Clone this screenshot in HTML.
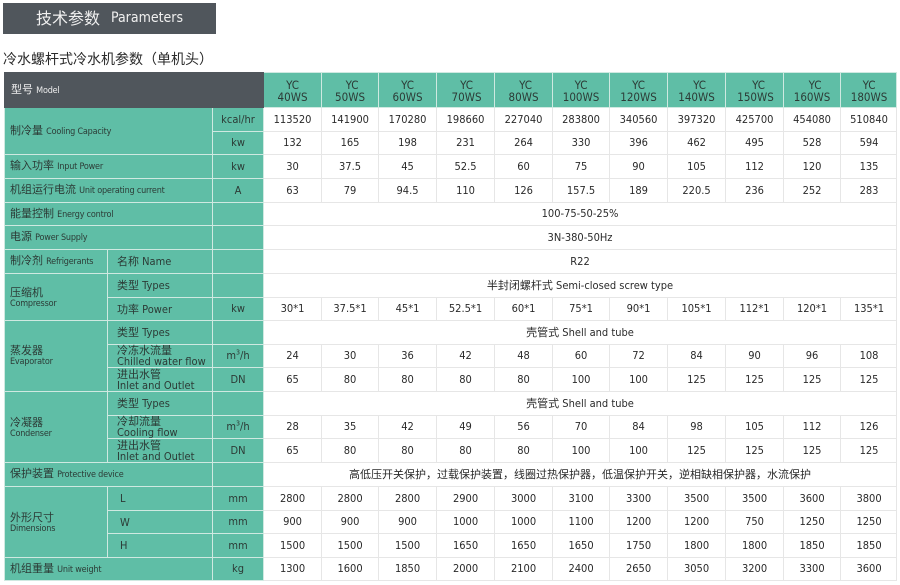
<!DOCTYPE html>
<html lang="zh">
<head>
<meta charset="utf-8">
<title>Parameters</title>
<style>
html,body{margin:0;padding:0;background:#fff;width:900px;height:585px;overflow:hidden}
body{position:relative;font-family:"DejaVu Sans Condensed","DejaVu Sans","Noto Sans CJK SC",sans-serif;font-stretch:condensed;color:#2a2a2a}
.bar{position:absolute;left:3px;top:3px;width:213px;height:31px;background:#50565c;color:#f0f0f0;line-height:31px;white-space:nowrap}
.bar b{font-weight:400;font-size:16px;position:absolute;left:33px;top:0}
.bar i{font-style:normal;font-size:14px;position:absolute;left:108px;top:0}
.title{position:absolute;left:3px;top:50px;font-size:14px;line-height:20px;color:#2a2a2a;white-space:nowrap}
table{position:absolute;left:4px;top:72px;width:892px;border-collapse:collapse;table-layout:fixed;font-size:11px;line-height:12px;filter:blur(.25px)}
td{padding:0;border:1px solid #e6e6e6;text-align:center;white-space:nowrap;background:#fff}
td:last-child:not([colspan]){padding-left:1px}
tr{height:24px}
tr.s{height:23px}
td.g{background:#5fbea6;border-color:#cfe9e1;color:#2c3b36}
td.l{text-align:left;padding-left:5px}
td.m{text-align:left;padding-left:9px;line-height:11px}
td.k{padding-left:12px}
td.t{line-height:10px;padding-top:2px}
td small{font-size:9px;letter-spacing:-.2px}
td.h{background:#5fbea6;border-color:#cfe9e1;line-height:12px;padding-top:1px;color:#2c3b36;font-size:11.5px}
td.h span{position:relative}
td.d{background:#50565c;border-color:#50565c;color:#eee;text-align:left;padding-left:6px}
sup{font-size:7px;line-height:0}
</style>
</head>
<body>
<div class="bar"><b>技术参数</b><i>Parameters</i></div>
<div class="title">冷水螺杆式冷水机参数（单机头）</div>
<table>
<colgroup><col style="width:103px"><col style="width:105px"><col style="width:51px"><col style="width:58px"><col style="width:57px"><col style="width:58px"><col style="width:58px"><col style="width:58px"><col style="width:57px"><col style="width:58px"><col style="width:58px"><col style="width:58px"><col style="width:57px"><col style="width:56px"></colgroup>
<tr style="height:35px"><td class="d" colspan="3">型号 <small>Model</small></td><td class="h">YC<br>40WS</td><td class="h"><span style="left:2px">YC</span><br>50WS</td><td class="h">YC<br>60WS</td><td class="h"><span style="left:1px">YC</span><br><span style="left:1px">70WS</span></td><td class="h"><span style="left:2px">YC</span><br>80WS</td><td class="h">YC<br>100WS</td><td class="h">YC<br>120WS</td><td class="h"><span style="left:3px">YC</span><br>140WS</td><td class="h"><span style="left:4px">YC</span><br><span style="left:1px">150WS</span></td><td class="h"><span style="left:3px">YC</span><br>160WS</td><td class="h">YC<br>180WS</td></tr>
<tr><td class="g l" colspan="2" rowspan="2">制冷量 <small>Cooling Capacity</small></td><td class="g">kcal/hr</td><td>113520</td><td>141900</td><td>170280</td><td>198660</td><td>227040</td><td>283800</td><td>340560</td><td>397320</td><td>425700</td><td>454080</td><td>510840</td></tr>
<tr class="s"><td class="g">kw</td><td>132</td><td>165</td><td>198</td><td>231</td><td>264</td><td>330</td><td>396</td><td>462</td><td>495</td><td>528</td><td>594</td></tr>
<tr><td class="g l" colspan="2">输入功率 <small>Input Power</small></td><td class="g">kw</td><td>30</td><td>37.5</td><td>45</td><td>52.5</td><td>60</td><td>75</td><td>90</td><td>105</td><td>112</td><td>120</td><td>135</td></tr>
<tr><td class="g l" colspan="2">机组运行电流 <small>Unit operating current</small></td><td class="g">A</td><td>63</td><td>79</td><td>94.5</td><td>110</td><td>126</td><td>157.5</td><td>189</td><td>220.5</td><td>236</td><td>252</td><td>283</td></tr>
<tr class="s"><td class="g l" colspan="2">能量控制 <small>Energy control</small></td><td class="g"></td><td colspan="11">100-75-50-25%</td></tr>
<tr><td class="g l" colspan="2">电源 <small>Power Supply</small></td><td class="g"></td><td colspan="11">3N-380-50Hz</td></tr>
<tr><td class="g l">制冷剂 <small>Refrigerants</small></td><td class="g m">名称 Name</td><td class="g"></td><td colspan="11">R22</td></tr>
<tr><td class="g l t" rowspan="2">压缩机<br><small>Compressor</small></td><td class="g m">类型 Types</td><td class="g"></td><td colspan="11">半封闭螺杆式 Semi-closed screw type</td></tr>
<tr class="s"><td class="g m">功率 Power</td><td class="g">kw</td><td>30*1</td><td>37.5*1</td><td>45*1</td><td>52.5*1</td><td>60*1</td><td>75*1</td><td>90*1</td><td>105*1</td><td>112*1</td><td>120*1</td><td>135*1</td></tr>
<tr><td class="g l" rowspan="3" style="line-height:10px">蒸发器<br><small>Evaporator</small></td><td class="g m">类型 Types</td><td class="g"></td><td colspan="11">壳管式 Shell and tube</td></tr>
<tr class="s"><td class="g m">冷冻水流量<br>Chilled water flow</td><td class="g">m<sup>3</sup>/h</td><td>24</td><td>30</td><td>36</td><td>42</td><td>48</td><td>60</td><td>72</td><td>84</td><td>90</td><td>96</td><td>108</td></tr>
<tr><td class="g m">进出水管<br>Inlet and Outlet</td><td class="g">DN</td><td>65</td><td>80</td><td>80</td><td>80</td><td>80</td><td>100</td><td>100</td><td>125</td><td>125</td><td>125</td><td>125</td></tr>
<tr><td class="g l t" rowspan="3">冷凝器<br><small>Condenser</small></td><td class="g m">类型 Types</td><td class="g"></td><td colspan="11">壳管式 Shell and tube</td></tr>
<tr class="s"><td class="g m">冷却流量<br>Cooling flow</td><td class="g">m<sup>3</sup>/h</td><td>28</td><td>35</td><td>42</td><td>49</td><td>56</td><td>70</td><td>84</td><td>98</td><td>105</td><td>112</td><td>126</td></tr>
<tr><td class="g m">进出水管<br>Inlet and Outlet</td><td class="g">DN</td><td>65</td><td>80</td><td>80</td><td>80</td><td>80</td><td>100</td><td>100</td><td>125</td><td>125</td><td>125</td><td>125</td></tr>
<tr><td class="g l" colspan="2">保护装置 <small>Protective device</small></td><td class="g"></td><td colspan="11">高低压开关保护，过载保护装置，线圈过热保护器，低温保护开关，逆相缺相保护器，水流保护</td></tr>
<tr><td class="g l t" rowspan="3">外形尺寸<br><small>Dimensions</small></td><td class="g m k">L</td><td class="g">mm</td><td>2800</td><td>2800</td><td>2800</td><td>2900</td><td>3000</td><td>3100</td><td>3300</td><td>3500</td><td>3500</td><td>3600</td><td>3800</td></tr>
<tr class="s"><td class="g m k">W</td><td class="g">mm</td><td>900</td><td>900</td><td>900</td><td>1000</td><td>1000</td><td>1100</td><td>1200</td><td>1200</td><td>750</td><td>1250</td><td>1250</td></tr>
<tr><td class="g m k">H</td><td class="g">mm</td><td>1500</td><td>1500</td><td>1500</td><td>1650</td><td>1650</td><td>1650</td><td>1750</td><td>1800</td><td>1800</td><td>1850</td><td>1850</td></tr>
<tr class="s"><td class="g l" colspan="2">机组重量 <small>Unit weight</small></td><td class="g">kg</td><td>1300</td><td>1600</td><td>1850</td><td>2000</td><td>2100</td><td>2400</td><td>2650</td><td>3050</td><td>3200</td><td>3300</td><td>3600</td></tr>
</table>
</body>
</html>
